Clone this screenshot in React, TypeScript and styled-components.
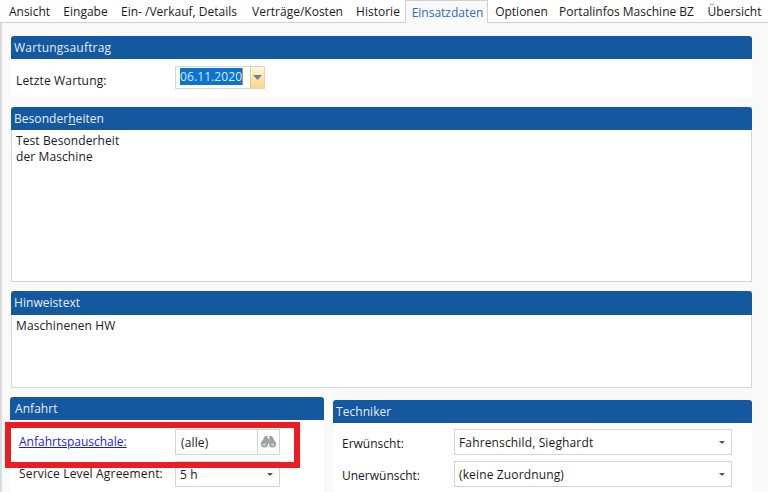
import React from "react";
import styled, { createGlobalStyle } from "styled-components";

const Global = createGlobalStyle`
  html, body { margin: 0; padding: 0; background: #f9f9f9; }
  * { box-sizing: border-box; }
`;

const Page = styled.div`
  position: relative;
  display: flex;
  flex-direction: column;
  width: 768px;
  height: 492px;
  overflow: hidden;
  background: #f9f9f9;
  font-family: "Open Sans", "Noto Sans", sans-serif;
  font-size: 12px;
  color: #1a1a1a;
`;

const TabBar = styled.div`
  display: flex;
  flex: none;
  height: 23px;
  padding-left: 2px;
  background: #ffffff;
  border-bottom: 1px solid #d0d0d0;
`;

const Tab = styled.div<{ $w: number; $active?: boolean }>`
  width: ${(p) => p.$w}px;
  flex: none;
  height: ${(p) => (p.$active ? 23 : 22)}px;
  padding-left: ${(p) => (p.$active ? 2 : 0)}px;
  line-height: 24px;
  text-align: center;
  white-space: nowrap;
  color: ${(p) => (p.$active ? "#2a6fb8" : "#1a1a1a")};
  background: ${(p) => (p.$active ? "#f9f9f9" : "transparent")};
  border: ${(p) => (p.$active ? "1px solid #d0d0d0" : "none")};
  border-bottom: none;
`;

const Content = styled.div`
  flex: 1;
  padding: 13px 16px 0 9px;
  display: flex;
  flex-direction: column;
  border-left: 2px solid #dcdcdc;
`;

const Panel = styled.section<{ $h: number; $mb: number }>`
  height: ${(p) => p.$h}px;
  margin-bottom: ${(p) => p.$mb}px;
  display: flex;
  flex-direction: column;
`;

const Header = styled.div<{ $h?: number; $pl?: number; $ls?: number }>`
  height: ${(p) => p.$h ?? 23}px;
  flex: none;
  padding-left: ${(p) => p.$pl ?? 3}px;
  line-height: 23px;
  letter-spacing: ${(p) => p.$ls ?? 0.05}px;
  background: #14589f;
  color: #e8eef6;
  font-size: 12px;
  border-radius: 3px 3px 0 0;
`;

const PlainBody = styled.div`
  flex: 1;
  display: flex;
  align-items: center;
  padding: 0 0 0 5px;
  background: #ffffff;
`;

const TextArea = styled.div`
  flex: 1;
  padding: 3px 4px;
  line-height: 16px;
  letter-spacing: 0.1px;
  background: #ffffff;
  border: 1px solid #d4d4d4;
  border-top: none;
`;

const Label = styled.span<{ $w: number; $mt?: number; $ls?: number }>`
  width: ${(p) => p.$w}px;
  flex: none;
  white-space: nowrap;
  margin-top: ${(p) => p.$mt ?? 0}px;
  letter-spacing: ${(p) => p.$ls ?? 0}px;
`;

const DateField = styled.div`
  display: flex;
  width: 90px;
  height: 23px;
  margin-top: -1px;
  border: 1px solid #d6d6d6;
  background: #ffffff;
`;

const DateText = styled.div`
  flex: 1;
  padding: 1px 0 0 4px;
`;

const Selected = styled.span`
  display: inline-block;
  height: 17px;
  line-height: 17px;
  letter-spacing: 0.1px;
  background: #0a74d0;
  color: #dbe9f6;
  border-right: 1px solid #e8842a;
`;

const DateButton = styled.div`
  width: 14px;
  display: flex;
  align-items: center;
  justify-content: center;
  border-left: 1px solid #d8cfa0;
  background: linear-gradient(#fff6d8, #fcd67e);
`;

const Columns = styled.div`
  display: flex;
  gap: 9px;
  align-items: flex-start;
  margin-left: -1px;
`;

const LeftColumn = styled.section`
  width: 314px;
  flex: none;
`;

const RightColumn = styled.section`
  flex: 1;
  margin-top: 3px;
`;

const FormBody = styled.div`
  background: #ffffff;
  height: 90px;
`;

const RightBody = styled(FormBody)`
  padding: 6px 20px 0 9px;
`;

const LeftBody = styled(FormBody)`
  padding: 9px 0 0 9px;
`;

const Row = styled.div<{ $mb: number }>`
  display: flex;
  align-items: center;
  margin-bottom: ${(p) => p.$mb}px;
`;

const Link = styled.a`
  width: 156px;
  flex: none;
  margin-top: -2px;
  color: #1a1ae0;
  text-decoration: underline;
`;

const Field = styled.div`
  display: flex;
  align-items: center;
  width: 105px;
  height: 26px;
  border: 1px solid #d4d4d4;
  background: #ffffff;
  padding-left: 4px;
  letter-spacing: 0.14px;
`;

const LookupText = styled.span`
  flex: 1;
  padding-left: 1px;
`;

const LookupButton = styled.div`
  width: 22px;
  height: 100%;
  display: flex;
  align-items: center;
  justify-content: center;
  border-left: 1px solid #d4d4d4;
`;

const Select = styled(Field) <{ $w: number }>`
  width: ${(p) => p.$w}px;
  justify-content: space-between;
  padding-right: 6px;
`;

const Caret = styled.span`
  width: 0;
  height: 0;
  border-left: 3px solid transparent;
  border-right: 3px solid transparent;
  border-top: 3px solid #555;
`;

const Highlight = styled.div`
  position: absolute;
  left: 5px;
  top: 422px;
  width: 295px;
  height: 46px;
  border: 6px solid #ed1c24;
  pointer-events: none;
`;

const tabs: [string, number][] = [
  ["Ansicht", 55],
  ["Eingabe", 57],
  ["Ein- /Verkauf, Details", 130],
  ["Verträge/Kosten", 107],
  ["Historie", 54],
];

export default function App() {
  return (
    <Page>
      <Global />
      <TabBar>
        {tabs.map(([t, w]) => (
          <Tab key={t} $w={w}>{t}</Tab>
        ))}
        <Tab $w={83} $active>Einsatzdaten</Tab>
        <Tab $w={67}>Optionen</Tab>
        <Tab $w={143}>Portalinfos Maschine BZ</Tab>
        <Tab $w={73}>Übersicht</Tab>
      </TabBar>
      <Content>
        <Panel $h={61} $mb={10}>
          <Header $ls={0.2}>Wartungsauftrag</Header>
          <PlainBody>
            <Label $w={159} $mt={4} $ls={0.15}>Letzte Wartung:</Label>
            <DateField>
              <DateText><Selected>06.11.2020</Selected></DateText>
              <DateButton>
                <svg width="9" height="5" viewBox="0 0 9 5"><path d="M0 0h9L4.5 5z" fill="#6a7fa8" /></svg>
              </DateButton>
            </DateField>
          </PlainBody>
        </Panel>
        <Panel $h={175} $mb={9}>
          <Header>Besonder<u>h</u>eiten</Header>
          <TextArea>Test Besonderheit<br />der Maschine</TextArea>
        </Panel>
        <Panel $h={97} $mb={9}>
          <Header $h={24}>Hinweistext</Header>
          <TextArea>Maschinenen HW</TextArea>
        </Panel>
        <Columns>
          <LeftColumn>
            <Header $pl={5}>Anfahrt</Header>
            <LeftBody>
              <Row $mb={6}>
                <Link>Anfahrtspauschale:</Link>
                <Field>
                  <LookupText>(alle)</LookupText>
                  <LookupButton>
                    <svg width="15" height="12" viewBox="0 0 15 12">
                      <path d="M4 0h2.500L7 3h1l.5-3H11l4 7.500H0z" fill="#a3a3a3" />
                      <circle cx="3.500" cy="8" r="3.500" fill="#97a3a9" />
                      <circle cx="11.500" cy="8" r="3.500" fill="#97a3a9" />
                      <circle cx="3.500" cy="8.500" r="1.800" fill="#bcc8ce" />
                      <circle cx="11.500" cy="8.500" r="1.800" fill="#bcc8ce" />
                    </svg>
                  </LookupButton>
                </Field>
              </Row>
              <Row $mb={0}>
                <Label $w={156} $mt={-2} $ls={0.17}>Service Level Agreement:</Label>
                <Select $w={105}>5 h<Caret /></Select>
              </Row>
            </LeftBody>
          </LeftColumn>
          <RightColumn>
            <Header>Techniker</Header>
            <RightBody>
              <Row $mb={6}>
                <Label $w={112} $mt={3}>Erwünscht:</Label>
                <Select $w={278}>Fahrenschild, Sieghardt<Caret /></Select>
              </Row>
              <Row $mb={0}>
                <Label $w={112} $mt={3}>Unerwünscht:</Label>
                <Select $w={278}>(keine Zuordnung)<Caret /></Select>
              </Row>
            </RightBody>
          </RightColumn>
        </Columns>
      </Content>
      <Highlight />
    </Page>
  );
}
